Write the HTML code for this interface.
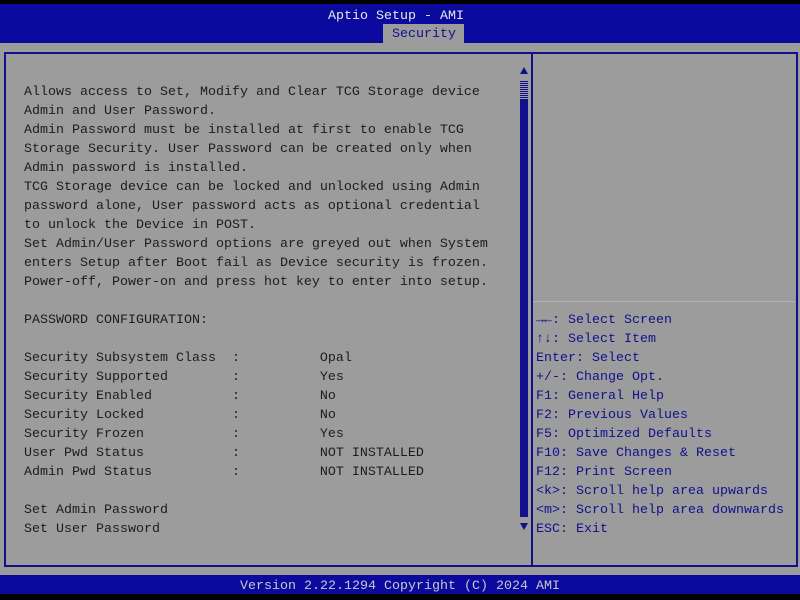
<!DOCTYPE html>
<html><head><style>
*{margin:0;padding:0}
body{width:800px;height:600px;background:#000;position:relative;overflow:hidden;font-family:"Liberation Mono",monospace;font-size:13.33px}
.t{position:absolute;white-space:pre;line-height:19px;height:19px}
#top{position:absolute;left:0;top:4px;width:800px;height:39px;background:#0a0a9e}
#gray{position:absolute;left:0;top:43px;width:800px;height:532px;background:#9c9c9c}
#box{position:absolute;left:4px;top:52px;width:790px;height:511px;border:2px solid #10108a}
#div{position:absolute;left:531px;top:52px;width:2px;height:513px;background:#10108a}
#hl{position:absolute;left:533px;top:301px;width:262px;height:1px;background:#b0b0c0}
#bot{position:absolute;left:0;top:575px;width:800px;height:19px;background:#0a0a9e}
.l{color:#1c1c1c}
.h{color:#10108e}
</style></head><body>
<div id="top"></div>
<div class="t" style="left:0;width:792px;top:7px;text-align:center;color:#e8e8e8">Aptio Setup - AMI</div>
<div style="position:absolute;left:383px;top:24px;width:81px;height:19px;background:#9c9c9c"></div>
<div class="t" style="left:392px;top:25px;color:#10108e">Security</div>
<div id="gray"></div>
<div id="box"></div>
<div id="div"></div>
<div id="hl"></div>
<div style="position:absolute;left:520px;top:67px;width:0;height:0;border-left:4px solid transparent;border-right:4px solid transparent;border-bottom:7px solid #10108e"></div>
<div style="position:absolute;left:520px;top:81px;width:8px;height:19px;background:repeating-linear-gradient(0deg,#10108e 0 1px,#9c9c9c 1px 2px)"></div>
<div style="position:absolute;left:520px;top:100px;width:8px;height:417px;background:#10108e"></div>
<div style="position:absolute;left:520px;top:523px;width:0;height:0;border-left:4px solid transparent;border-right:4px solid transparent;border-top:7px solid #10108e"></div>
<div class="t l" style="left:24px;top:83px">Allows access to Set, Modify and Clear TCG Storage device
Admin and User Password.
Admin Password must be installed at first to enable TCG
Storage Security. User Password can be created only when
Admin password is installed.
TCG Storage device can be locked and unlocked using Admin
password alone, User password acts as optional credential
to unlock the Device in POST.
Set Admin/User Password options are greyed out when System
enters Setup after Boot fail as Device security is frozen.
Power-off, Power-on and press hot key to enter into setup.

PASSWORD CONFIGURATION:

Security Subsystem Class  :          Opal
Security Supported        :          Yes
Security Enabled          :          No
Security Locked           :          No
Security Frozen           :          Yes
User Pwd Status           :          NOT INSTALLED
Admin Pwd Status          :          NOT INSTALLED

Set Admin Password
Set User Password</div>
<div class="t h" style="left:536px;top:311px">→←: Select Screen
↑↓: Select Item
Enter: Select
+/-: Change Opt.
F1: General Help
F2: Previous Values
F5: Optimized Defaults
F10: Save Changes &amp; Reset
F12: Print Screen
&lt;k&gt;: Scroll help area upwards
&lt;m&gt;: Scroll help area downwards
ESC: Exit</div>
<div id="bot"></div>
<div class="t" style="left:0;width:800px;top:577px;text-align:center;color:#c8c8c8">Version 2.22.1294 Copyright (C) 2024 AMI</div>
</body></html>
